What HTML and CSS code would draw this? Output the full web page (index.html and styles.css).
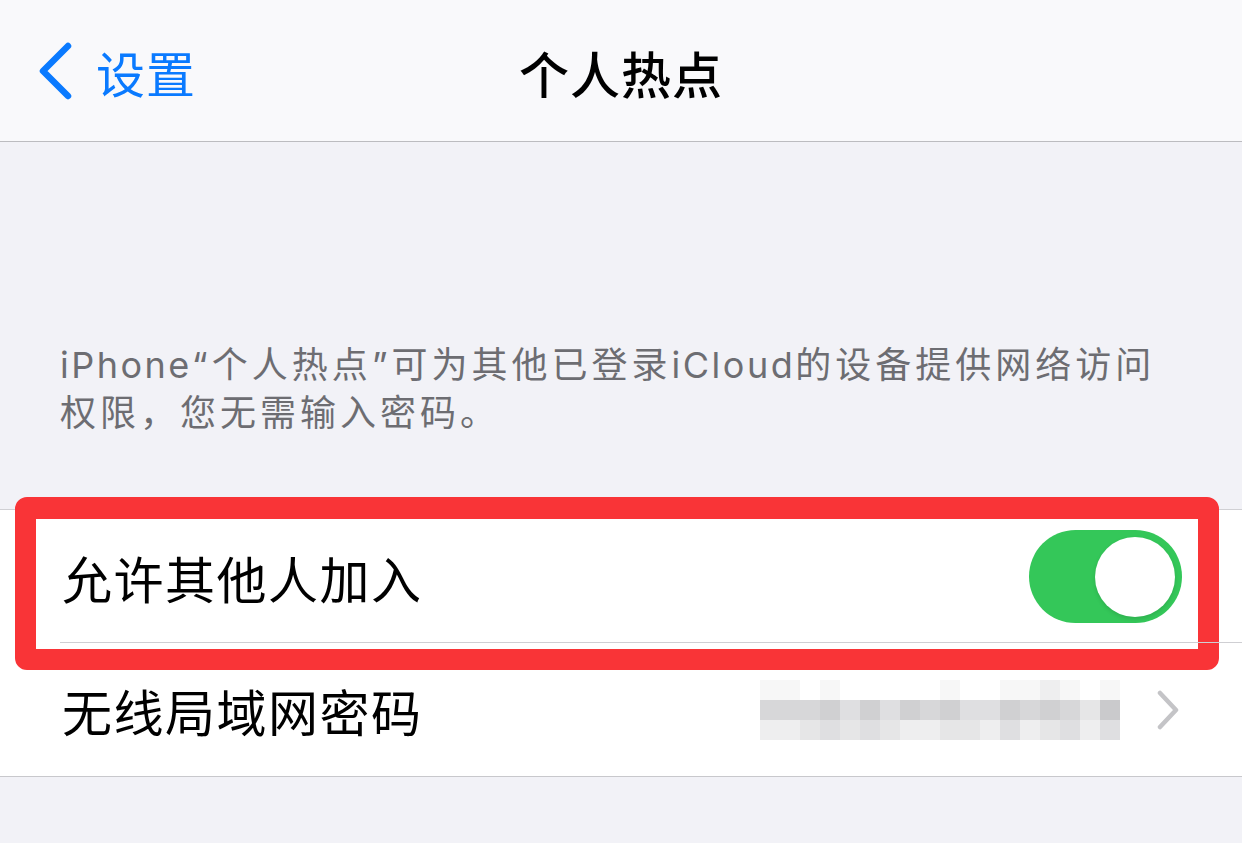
FILE: index.html
```html
<!DOCTYPE html>
<html lang="zh-CN">
<head>
<meta charset="utf-8">
<title>个人热点</title>
<link rel="stylesheet" href="styles.css">
</head>
<body>
<div class="screen">
  <header class="navbar">
    <div class="back">
      <svg class="back-chevron" width="40" height="60" viewBox="0 0 40 60">
        <path d="M30 4 L5 29 L30 54" fill="none" stroke="#0a7aff" stroke-width="6.5" stroke-linecap="round" stroke-linejoin="round"/>
      </svg>
      <span class="back-label">设置</span>
    </div>
    <h1 class="title">个人热点</h1>
  </header>

  <p class="footnote"><span class="latin">iPhone</span>“个人热点”可为其他已登录<span class="latin">iCloud</span>的设备提供网络访问权限，您无需输入密码。</p>

  <section class="group">
    <div class="row row-first">
      <span class="row-label">允许其他人加入</span>
      <div class="toggle on"><div class="knob"></div></div>
      <div class="highlight"></div>
    </div>
    <div class="row">
      <span class="row-label">无线局域网密码</span>
      <div class="row-value">
        <div class="mosaic">
          <i class="p1"></i><i class="p1"></i><i class="p0"></i><i class="p1"></i><i class="p0"></i><i class="p0"></i><i class="p0"></i><i class="p0"></i><i class="p0"></i><i class="p1"></i><i class="p0"></i><i class="p0"></i><i class="p1"></i><i class="p1"></i><i class="p2"></i><i class="p1"></i><i class="p0"></i><i class="p1"></i>
          <i class="p5"></i><i class="p5"></i><i class="p5"></i><i class="p6"></i><i class="p4"></i><i class="p6"></i><i class="p4"></i><i class="p6"></i><i class="p5"></i><i class="p6"></i><i class="p4"></i><i class="p4"></i><i class="p6"></i><i class="p5"></i><i class="p6"></i><i class="p5"></i><i class="p3"></i><i class="p7"></i>
          <i class="p2"></i><i class="p2"></i><i class="p3"></i><i class="p4"></i><i class="p3"></i><i class="p4"></i><i class="p3"></i><i class="p2"></i><i class="p2"></i><i class="p3"></i><i class="p3"></i><i class="p2"></i><i class="p4"></i><i class="p2"></i><i class="p3"></i><i class="p4"></i><i class="p2"></i><i class="p4"></i>
        </div>
        <svg class="chevron" width="22" height="40" viewBox="0 0 22 40">
          <path d="M3 3 L19 20 L3 37" fill="none" stroke="#c4c4c7" stroke-width="4.5" stroke-linecap="round" stroke-linejoin="round"/>
        </svg>
      </div>
    </div>
  </section>
</div>
</body>
</html>
```

FILE: styles.css
```css
html, body {
  margin: 0;
  padding: 0;
}

body {
  width: 1242px;
  height: 843px;
  overflow: hidden;
  background: #f2f2f7;
  font-family: "Inter", "Noto Sans CJK SC", sans-serif;
}

.screen {
  display: flex;
  flex-direction: column;
}

.navbar {
  height: 141px;
  border-bottom: 1px solid #bcbcc0;
  background: #f9f9fb;
  position: relative;
  display: flex;
  align-items: center;
  justify-content: center;
}

.back {
  position: absolute;
  left: 38px;
  top: 0;
  bottom: 0;
  display: flex;
  align-items: center;
  gap: 18px;
  color: #0a7aff;
}

.back-chevron {
  display: block;
  margin-top: 2px;
}

.back-label {
  font-family: "Noto Sans CJK SC", sans-serif;
  font-size: 49px;
  letter-spacing: 1px;
  line-height: 1;
  margin-top: 2px;
}

.title {
  margin: 0;
  font-family: "Noto Sans CJK SC", sans-serif;
  font-size: 50px;
  font-weight: 500;
  letter-spacing: 1px;
  color: #000;
  line-height: 1;
  margin-top: 2px;
}

.footnote {
  margin: 199px 0 0;
  padding: 0 70px 0 60px;
  font-family: "Inter", "Noto Sans CJK SC", sans-serif;
  font-size: 36px;
  letter-spacing: 4px;
  line-height: 48px;
  color: #6d6d72;
}

.latin {
  letter-spacing: 2.5px;
}

.group {
  margin-top: 72px;
  background: #fff;
  border-top: 1px solid #d0d0d4;
  border-bottom: 1px solid #c8c8cc;
}

.row {
  position: relative;
  height: 133px;
  display: flex;
  align-items: center;
  justify-content: space-between;
  padding: 0 60px 0 62px;
}

.row-first::after {
  content: "";
  position: absolute;
  left: 60px;
  right: 0;
  bottom: 0;
  height: 1px;
  background: #cfcfd3;
}

.row-label {
  font-family: "Noto Sans CJK SC", sans-serif;
  font-size: 50px;
  letter-spacing: 1.5px;
  color: #000;
  line-height: 1;
}

.toggle {
  width: 153px;
  height: 93px;
  border-radius: 47px;
  background: #34c759;
  position: relative;
  display: flex;
  align-items: center;
  justify-content: flex-end;
  padding-right: 7px;
  box-sizing: border-box;
}

.knob {
  width: 80px;
  height: 80px;
  border-radius: 50%;
  background: #fff;
  box-shadow: 0 2px 4px rgba(0, 0, 0, 0.12);
}

.highlight {
  position: absolute;
  left: 15px;
  right: 23px;
  top: -13px;
  height: 173px;
  box-sizing: border-box;
  border: 21px solid #f93437;
  border-top-width: 22px;
  border-radius: 12px;
  pointer-events: none;
}

.row-value {
  display: flex;
  align-items: center;
  gap: 37px;
  margin-right: 3px;
}

.mosaic {
  display: grid;
  grid-template-columns: repeat(18, 20px);
  grid-auto-rows: 20px;
}

.mosaic i {
  display: block;
}

.p0 { background: #ffffff; }
.p1 { background: #f7f7f7; }
.p2 { background: #eeeeef; }
.p3 { background: #e6e6e7; }
.p4 { background: #dfdfe1; }
.p5 { background: #d7d7d9; }
.p6 { background: #d0d0d2; }
.p7 { background: #cacacc; }

.chevron {
  display: block;
}
```
